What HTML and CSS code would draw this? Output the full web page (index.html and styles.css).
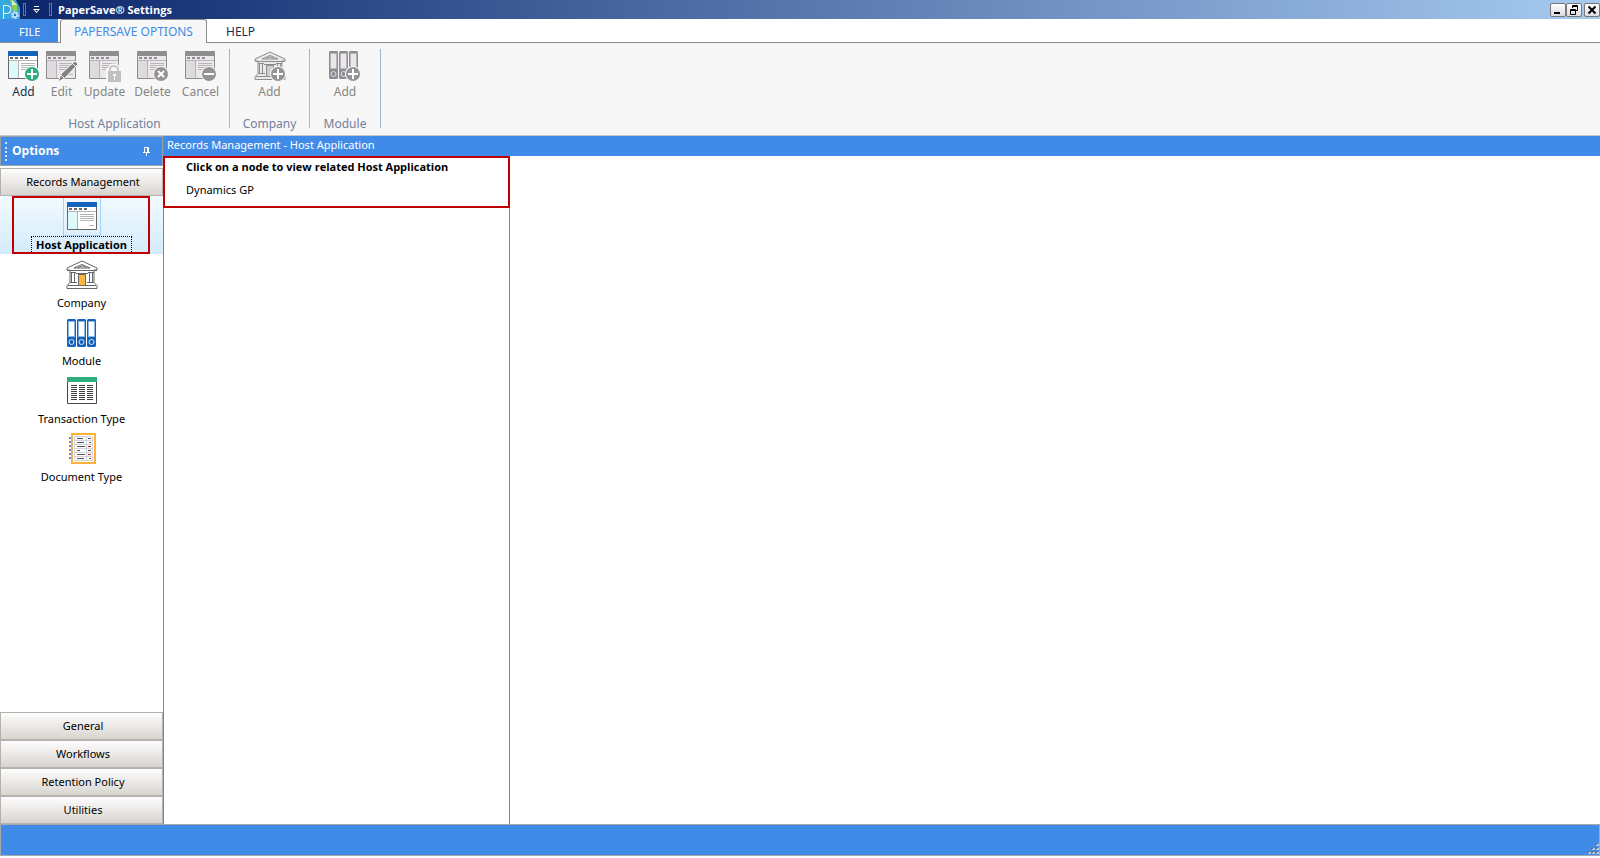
FILE: index.html
```
<!DOCTYPE html>
<html lang="en">

<head>
  <meta charset="UTF-8">
  <title>PaperSave® Settings</title>
  <link rel="stylesheet" href="styles.css">
</head>

<body>
  <!-- Shared icons -->
  <svg class="sprite" aria-hidden="true">
    <symbol id="i-window" viewBox="0 0 30 28">
      <path class="back" d="M0 0h30v28H0z"/>
      <path class="pale" d="M1 10h9v17H1z"/>
      <path class="line" d="M0.500 4v23.500h29V4"/>
      <path class="split" d="M10.500 10v17M1 9.500h28"/>
      <path class="bar" d="M0 0h30v5H0z"/>
      <path class="dots" d="M2 6h3v2H2zM7 6h3v2H7zM12 6h3v2h-3zM17 6h3v2h-3z"/>
      <path class="rows" d="M13 12.500h14M13 14.500h14M13 16.500h14M13 18.500h14M22 23.500h5"/>
    </symbol>
    <symbol id="i-bank" viewBox="0 0 32 29">
      <g class="bank">
        <path class="back" d="M16 1L1 8v2h3v12.500l-3 3v3h30v-3l-3-3V10h3V8z"/>
        <path d="M16 4.500L8 8h16z"/>
        <path d="M1 10.500h30M12 8q4-4 8 0"/>
        <path d="M4 12.500h6M22 12.500h6M5.500 12v10M8.500 12v10M23.500 12v10M26.500 12v10M4 22.500h7M21 22.500h7M10 13.500h12"/>
        <path d="M2 25.500h28"/>
        <path class="door" d="M12.500 14.500h7v11h-7z"/>
      </g>
    </symbol>
    <symbol id="i-binders" viewBox="0 0 30 28">
      <path class="bar" d="M0 1l1-1h7l1 1v26l-1 1H1l-1-1zM10 1l1-1h7l1 1v26l-1 1h-7l-1-1zM20 1l1-1h7l1 1v26l-1 1h-7l-1-1z"/>
      <path class="sheet" d="M1.500 2.500h6v15h-6zM11.500 2.500h6v15h-6zM21.500 2.500h6v15h-6z"/>
      <g class="rings"><circle cx="4.500" cy="23" r="2.500"/><circle cx="14.500" cy="23" r="2.500"/><circle cx="24.500" cy="23" r="2.500"/></g>
    </symbol>
    <symbol id="i-plus" viewBox="0 0 16 16">
      <circle class="ring" cx="8" cy="8" r="8"/><circle class="disc" cx="8" cy="8" r="7"/>
      <path stroke="#fff" stroke-width="2" d="M8 3v10M3 8h10"/>
    </symbol>
  </svg>

  <div class="window">
    <header class="titlebar">
      <svg class="logo" width="20" height="19" viewBox="0 0 20 19">
        <path fill="#35a8e0" d="M0 0h16l4 8v11H0z"/>
        <path fill="#8ed04b" d="M10 0h3l4 5v6h-4z"/>
        <path fill="#d8f0c0" d="M12 0l5 5h-5z"/>
        <path fill="none" stroke="#fff" d="M3.500 19V5.500H7q4 0 4 4t-4 4H4"/>
        <circle cx="15" cy="15" r="3" fill="none" stroke="#b9dcf5" stroke-width="2" stroke-dasharray="2 1"/>
        <circle cx="15" cy="15" r="2" fill="#246ec0" stroke="#fff"/>
      </svg>
      <span class="divider"></span>
      <button class="quick" aria-label="Customize toolbar">
        <svg width="7" height="8" viewBox="0 0 7 8"><path fill="#fff" d="M1 0h5v1H1zM0 3h7L3.500 7z"/><path fill="#111" d="M2 4h3L3.500 5.500z"/></svg>
      </button>
      <span class="divider"></span>
      <h1>PaperSave® Settings</h1>
      <div class="controls">
        <button aria-label="Minimize"><svg width="14" height="12" viewBox="0 0 14 12"><path d="M3 8h6v2H3z"/></svg></button>
        <button aria-label="Restore"><svg width="14" height="12" viewBox="0 0 14 12"><path fill="none" stroke="#000" d="M5.500 4V1.500h5v5H9M5 2.500h6M3.500 5.500h5v5h-5zM3 6.500h6"/></svg></button>
        <button class="close" aria-label="Close"><svg width="14" height="12" viewBox="0 0 14 12"><path fill="none" stroke="#000" stroke-width="2" d="M3.500 2.500l7 7M10.500 2.500l-7 7"/></svg></button>
      </div>
    </header>

    <nav class="tabs">
      <button class="tab file">FILE</button>
      <button class="tab active">PAPERSAVE OPTIONS</button>
      <button class="tab">HELP</button>
    </nav>

    <!-- Ribbon -->
    <section class="ribbon">
      <div class="group host">
        <div class="tools">
          <button class="tool">
            <svg width="32" height="32" viewBox="0 0 32 32"><use href="#i-window" width="30" height="28"/><use href="#i-plus" x="16" y="15" width="16" height="16"/></svg>
            Add
          </button>
          <button class="tool" disabled>
            <svg width="32" height="32" viewBox="0 0 32 32"><use href="#i-window" width="30" height="28"/>
              <path fill="#808080" stroke="#f7f7f7" d="M12 31l3-8L29 10l3 3-13 14z"/><path stroke="#f7f7f7" d="M26 12l4 4M15 24l3 3"/></svg>
            Edit
          </button>
          <button class="tool wide" disabled>
            <svg width="32" height="32" viewBox="0 0 32 32"><use href="#i-window" width="30" height="28"/>
              <path fill="#f7f7f7" d="M17 17h2c0-6 12-6 12 0h1v15H17z"/><path fill="none" stroke="#c9c6c9" stroke-width="2" d="M21 20v-2c0-4 8-4 8 0v2"/>
              <path fill="#c2bfc2" d="M19 20h13v11H19z"/><path fill="#f7f7f7" d="M24 23h3v2h-1v4h-1v-4h-1z"/></svg>
            Update
          </button>
          <button class="tool wide" disabled>
            <svg width="32" height="32" viewBox="0 0 32 32"><use href="#i-window" width="30" height="28"/>
              <circle class="ring" cx="24" cy="23" r="8"/><circle class="disc" cx="24" cy="23" r="7"/><path stroke="#fff" stroke-width="2" d="M21 20l6 6M27 20l-6 6"/></svg>
            Delete
          </button>
          <button class="tool wide" disabled>
            <svg width="32" height="32" viewBox="0 0 32 32"><use href="#i-window" width="30" height="28"/>
              <circle class="ring" cx="24" cy="23" r="8"/><circle class="disc" cx="24" cy="23" r="7"/><path stroke="#fff" stroke-width="2" d="M19 23h10"/></svg>
            Cancel
          </button>
        </div>
        <span class="caption">Host Application</span>
      </div>
      <div class="group company">
        <div class="tools">
          <button class="tool" disabled>
            <svg width="32" height="32" viewBox="0 0 32 32"><use href="#i-bank" width="32" height="29"/><use href="#i-plus" x="16" y="15" width="16" height="16"/></svg>
            Add
          </button>
        </div>
        <span class="caption">Company</span>
      </div>
      <div class="group module">
        <div class="tools">
          <button class="tool" disabled>
            <svg width="32" height="32" viewBox="0 0 32 32"><use href="#i-binders" width="30" height="28"/><use href="#i-plus" x="16" y="15" width="16" height="16"/></svg>
            Add
          </button>
        </div>
        <span class="caption">Module</span>
      </div>
    </section>

    <div class="workspace">
      <!-- Options sidebar -->
      <aside class="sidebar">
        <div class="side-head">
          <span class="grip"></span>
          <h2>Options</h2>
          <button class="pin" aria-label="Pin"><svg width="7" height="9" viewBox="0 0 7 9"><path fill="none" stroke="#fff" d="M1.500 5V0.500h4V5M0 5.500h7M3.500 6v3M4.500 1v4"/></svg></button>
        </div>
        <button class="section">Records Management</button>
        <div class="items">
          <button class="item selected">
            <span class="pic"><svg width="30" height="28"><use href="#i-window"/></svg></span>
            <span class="name">Host Application</span>
          </button>
          <button class="item">
            <span class="pic"><svg width="32" height="29"><use href="#i-bank"/></svg></span>
            <span class="name">Company</span>
          </button>
          <button class="item">
            <span class="pic"><svg width="30" height="28"><use href="#i-binders"/></svg></span>
            <span class="name">Module</span>
          </button>
          <button class="item">
            <span class="pic"><svg width="30" height="28" viewBox="0 0 30 28">
              <path fill="#fff" stroke="#484848" d="M0.500 0.500h29v26h-29z"/><path fill="#2fae7d" d="M0 0h30v5H0z"/>
              <path fill="none" stroke="#404040" stroke-width="6" stroke-dasharray="1 1" d="M7 8v15M15 8v15M23 8v15"/></svg></span>
            <span class="name">Transaction Type</span>
          </button>
          <button class="item">
            <span class="pic"><svg width="30" height="32" viewBox="0 0 30 32">
              <path fill="#fff" stroke="#ffb13b" stroke-width="2" d="M5 1h23v29H5z"/>
              <path fill="none" stroke="#d2d2d8" d="M7.500 3.500h18v24h-18zM19.500 3v25M8 7.500h17M8 11.500h17M8 15.500h17M8 19.500h17M8 23.500h17"/>
              <path stroke="#555" d="M10 5.500h6M21 5.500h3M10 9.500h7M22 9.500h2M10 13.500h8M10 17.500h3M21 17.500h3M10 21.500h8M10 25.500h7M22 25.500h2"/>
              <path stroke="#d42020" d="M21 13.500h3M21 21.500h3"/>
              <path stroke="#bbb" stroke-width="4" stroke-dasharray="2 2" d="M4 4v22"/>
              <path stroke="#888" stroke-width="2" stroke-dasharray="2 2" d="M3 4v22"/></svg></span>
            <span class="name">Document Type</span>
          </button>
        </div>
        <button class="section">General</button>
        <button class="section">Workflows</button>
        <button class="section">Retention Policy</button>
        <button class="section">Utilities</button>
      </aside>

      <main class="content">
        <div class="path">Records Management - Host Application</div>
        <div class="panes">
          <div class="tree">
            <div class="nodes">
              <strong>Click on a node to view related Host Application</strong>
              <a href="#">Dynamics GP</a>
            </div>
          </div>
          <div class="detail"></div>
        </div>
      </main>
    </div>

    <footer class="statusbar">
      <svg width="12" height="12" viewBox="0 0 12 12">
        <path fill="#a9c9f3" d="M9 1h3v2H9zM5 5h3v2H5zM9 5h3v2H9zM1 9h3v2H1zM5 9h3v2H5zM9 9h3v2H9z"/>
        <path fill="#6b7685" d="M8 0h2v2H8zM4 4h2v2H4zM8 4h2v2H8zM0 8h2v2H0zM4 8h2v2H4zM8 8h2v2H8z"/>
      </svg>
    </footer>
  </div>
</body>

</html>
```
FILE: styles.css
```
* {
  box-sizing: border-box;
}

body {
  margin: 0;
  font-family: "Noto Sans", "Open Sans", sans-serif;
  font-size: 11px;
  line-height: 16px;
  color: #000;
  background: #fff;
}

button {
  font: inherit;
  color: inherit;
  padding: 0;
  border: 0;
  background: none;
}

h1, h2 {
  margin: 0;
  font-size: 11px;
  color: #fff;
}

h1, h2, strong, .selected {
  font-family: "Open Sans", "Noto Sans", sans-serif;
}

svg {
  display: block;
  flex: none;
}

.sprite {
  position: absolute;
  width: 0;
  height: 0;
}

.window {
  display: flex;
  flex-direction: column;
  height: 100vh;
  padding-bottom: 2px;
}

/* Icon colours */
.back { fill: var(--back, #fff); }
.pale { fill: var(--pale, #dffafa); }
.line { fill: none; stroke: var(--line, #666); }
.split { fill: none; stroke: var(--rows, #b4b4b8); }
.bar { fill: var(--bar, #1463bd); }
.dots { fill: var(--line, #666); }
.rows { stroke: var(--rows, #b4b4b8); }
.bank { fill: none; stroke: var(--line, #666); }
.door { fill: var(--door, #ffb63f); }
.sheet { fill: var(--sheet, #fff); stroke: var(--edge, #8db8ea); }
.rings { fill: none; stroke: #d5e5f8; }
.ring { fill: #f7f7f7; }
.disc { fill: var(--disc, #2fae7d); }

/* Title bar */
.titlebar {
  display: flex;
  align-items: center;
  height: 19px;
  background: linear-gradient(90deg, #0a246a, #a6caf0);
}

.divider {
  width: 3px;
  height: 13px;
  margin: 0 3px;
  border: 1px solid #63759f;
}

.quick {
  padding: 0 6px 0 4px;
}

.titlebar h1 {
  padding-left: 3px;
}

.controls {
  display: flex;
  margin-left: auto;
}

.controls button {
  width: 16px;
  height: 14px;
  border: 1px solid #77777c;
  border-radius: 2px;
  background: linear-gradient(#fff, #dcdce0);
}

.controls .close {
  margin-left: 2px;
}

/* Tabs */
.tabs {
  display: flex;
  height: 24px;
  border-bottom: 1px solid #8c8c8c;
}

.tab {
  height: 23px;
  padding: 2px 19px 0;
  font-size: 12px;
  color: #15304f;
}

.file {
  width: 58px;
  margin-right: 2px;
  font-size: 11px;
  color: #fff;
  background: #418be8;
}

.active {
  width: 147px;
  height: 24px;
  padding: 0;
  color: #418be8;
  background: #f7f7f7;
  border: 1px solid #8c8c8c;
  border-bottom: 0;
  border-radius: 3px 3px 0 0;
}

/* Ribbon */
.ribbon {
  display: flex;
  height: 93px;
  padding: 6px 0 7px;
  background: #f7f7f7;
  border-bottom: 1px solid #c8c8c8;
}

.group {
  display: flex;
  flex-direction: column;
  align-items: center;
  justify-content: space-between;
  padding-top: 2px;
  border-right: 1px solid #a3b5d3;
}

.host { width: 230px; }
.company { width: 80px; }
.module { width: 71px; }

.tools {
  display: flex;
}

.tool {
  display: flex;
  flex-direction: column;
  gap: 1px;
  align-items: center;
  width: 38px;
  color: #15304f;
  font-size: 12px;
}

.wide {
  width: 48px;
}

.tool:disabled {
  color: #858585;
  --back: #ebe8eb;
  --bar: #8f8c8f;
  --line: #8f8c8f;
  --pale: #dedade;
  --rows: #b8b5b8;
  --door: #d0cdd0;
  --sheet: #ebe6eb;
  --edge: #b8b5b8;
  --disc: #969396;
}

.caption {
  color: #71809c;
  font-size: 12px;
  line-height: 8px;
}

/* Workspace */
.workspace {
  display: flex;
  flex: 1;
  min-height: 0;
}

.sidebar {
  display: flex;
  flex-direction: column;
  width: 164px;
  border-right: 1px solid #858585;
}

.side-head {
  display: flex;
  align-items: center;
  height: 30px;
  margin-bottom: 2px;
  padding: 0 12px 0 4px;
  background: #418be8;
  border: 1px solid #9aa0a8;
}

.side-head h2 {
  font-size: 12px;
}

.grip {
  height: 19px;
  margin-right: 5px;
  border-left: 2px dotted #d8e4f4;
}

.pin {
  margin-left: auto;
}

.section {
  height: 28px;
  padding-left: 3px;
  border: 1px solid #b5b2ad;
  background: linear-gradient(#fdfdfd, #d8d5d0);
}

.items {
  display: flex;
  flex: 1;
  flex-direction: column;
}

.item {
  display: flex;
  flex-direction: column;
  align-items: center;
  height: 58px;
}

.pic {
  display: flex;
  align-items: center;
  justify-content: center;
  width: 38px;
  height: 41px;
}

.name {
  padding: 0 4px;
}

.selected {
  position: relative;
  font-weight: bold;
  background: linear-gradient(#f2faff, #d3ebfb);
}

/* red highlight over the selected item */
.selected::after {
  content: "";
  position: absolute;
  inset: 0 13px 0 12px;
  border: 2px solid #c00000;
}

.selected .pic {
  height: 40px;
  border: 1px solid #a5d3f5;
}

.selected .name {
  border: 1px dotted #000;
}

.content {
  display: flex;
  flex: 1;
  flex-direction: column;
}

.path {
  height: 20px;
  padding: 1px 3px;
  color: #fff;
  background: #418be8;
}

.panes {
  display: flex;
  flex: 1;
}

.tree {
  width: 346px;
  border-right: 1px solid #858585;
}

.nodes {
  display: flex;
  flex-direction: column;
  gap: 7px;
  height: 52px;
  margin: 0 -1px;
  padding: 1px 21px;
  border: 2px solid #c00000;
}

.nodes a {
  color: #000;
  text-decoration: none;
}

.detail {
  flex: 1;
}

/* Status bar */
.statusbar {
  display: flex;
  align-items: flex-end;
  justify-content: flex-end;
  height: 32px;
  background: #418be8;
  border: 1px solid #a9a9ad;
}
```
